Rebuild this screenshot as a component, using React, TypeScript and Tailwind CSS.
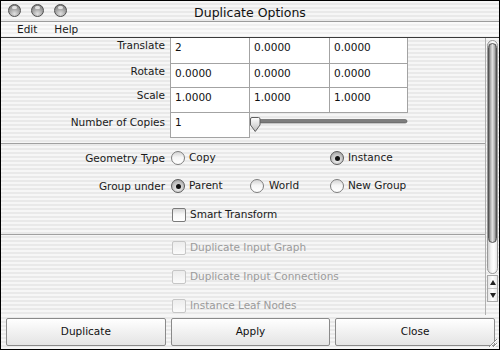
import React from "react";

const stripes =
  "bg-[repeating-linear-gradient(to_bottom,#f6f6f6_0px,#f6f6f6_2px,#e9e9e9_2px,#e9e9e9_4px)]";

function Light() {
  return (
    <div className="w-[13px] h-[13px] rounded-full border border-[#4f4f4f] bg-[radial-gradient(circle_at_50%_80%,#e2e2e2_0%,#a9a9a9_45%,#6e6e6e_100%)] relative">
      <div className="absolute left-[3px] top-[1px] w-[5px] h-[3px] rounded-full bg-[#f4f4f4] opacity-80" />
    </div>
  );
}

function Radio({ on }: { on?: boolean }) {
  return (
    <div
      className={
        on
          ? "w-[14px] h-[14px] rounded-full border border-[#5c5c5c] bg-[radial-gradient(circle_at_50%_70%,#f2f2f2_0%,#c4c4c4_55%,#8d8d8d_100%)] flex items-center justify-center shrink-0"
          : "w-[14px] h-[14px] rounded-full border border-[#7d7d7d] bg-[linear-gradient(to_bottom,#d4d4d4,#f6f6f6_45%,#ffffff)] shrink-0"
      }
    >
      {on && <div className="w-[5px] h-[5px] rounded-full bg-[#111]" />}
    </div>
  );
}

function Check({ disabled }: { disabled?: boolean }) {
  return (
    <div
      className={
        disabled
          ? "w-[14px] h-[14px] rounded-[2px] border border-[#c6c6c6] bg-[linear-gradient(to_bottom,#ececec,#fbfbfb)] shrink-0"
          : "w-[14px] h-[14px] rounded-[2px] border border-[#7a7a7a] bg-[linear-gradient(to_bottom,#d6d6d6,#f8f8f8_45%,#ffffff)] shrink-0"
      }
    />
  );
}

function Label({ children }: { children: React.ReactNode }) {
  return (
    <div className="w-[169px] shrink-0 text-right pr-[5px] leading-[13px]">{children}</div>
  );
}

function Cell({ v, w, last }: { v: string; w: string; last?: boolean }) {
  return (
    <div
      className={
        (last ? "border-r " : "") +
        w +
        " h-full bg-white border-l border-b border-[#a3a3a3] pl-[4px] pt-[3px] leading-[13px] text-[#111]"
      }
    >
      {v}
    </div>
  );
}

function FieldRow({
  label,
  vals,
  h,
}: {
  label: string;
  vals: string[];
  h: string;
}) {
  return (
    <div className={"flex " + h}>
      <div className="pt-[1px]">
        <Label>{label}</Label>
      </div>
      <Cell v={vals[0]} w="w-[79px]" />
      <Cell v={vals[1]} w="w-[80px]" />
      <Cell v={vals[2]} w="w-[79px]" last />
    </div>
  );
}

function Btn({ children }: { children: React.ReactNode }) {
  return (
    <div className="h-[28px] rounded-[2px] border border-[#8a8a8a] bg-[linear-gradient(to_bottom,#ffffff,#f1f1f1_50%,#e4e4e4)] flex items-center justify-center text-[#111] shadow-[inset_0_1px_0_#ffffff]">
      {children}
    </div>
  );
}

export default function App() {
  return (
    <div className="w-[500px] h-[350px] border border-black flex flex-col relative overflow-hidden font-['DejaVu_Sans',sans-serif] text-[10.5px] text-[#1a1a1a] bg-[#eeeeee]">
      {/* Title bar */}
      <div className={"h-[21px] shrink-0 border-b border-[#9c9c9c] grid grid-cols-[1fr_auto_1fr] " + stripes}>
        <div className="flex gap-[10px] pl-[7px] pt-[3px]">
          <Light />
          <Light />
          <Light />
        </div>
        <div className="text-[12.5px] leading-[15px] pt-[4px] text-[#111]">Duplicate Options</div>
        <div />
      </div>

      {/* Menu bar */}
      <div className="h-[16px] shrink-0 border-b border-[#3a3a3a] flex items-center bg-[repeating-linear-gradient(to_bottom,#fafafa_0px,#fafafa_2px,#f0f0f0_2px,#f0f0f0_4px)] leading-[13px]">
        <span className="pl-[16px]">Edit</span>
        <span className="pl-[17px]">Help</span>
      </div>

      {/* Middle */}
      <div className="h-[277px] shrink-0 flex">
        <div className={"w-[484px] shrink-0 overflow-hidden flex flex-col " + stripes}>
          <FieldRow label="Translate" vals={["2", "0.0000", "0.0000"]} h="h-[26px]" />
          <FieldRow label="Rotate" vals={["0.0000", "0.0000", "0.0000"]} h="h-[24px]" />
          <FieldRow label="Scale" vals={["1.0000", "1.0000", "1.0000"]} h="h-[25px]" />
          <div className="flex h-[25px]">
            <div className="pt-[3px]">
              <Label>Number of Copies</Label>
            </div>
            <div className="w-[80px] h-full bg-white border-l border-r border-b border-[#a3a3a3] pl-[4px] pt-[3px] leading-[13px] text-[#111]">
              1
            </div>
            <svg width="158" height="24" viewBox="0 0 158 24" className="shrink-0">
              <defs>
                <linearGradient id="thumb" x1="0" y1="0" x2="0" y2="1">
                  <stop offset="0" stopColor="#ffffff" />
                  <stop offset="1" stopColor="#bdbdbd" />
                </linearGradient>
              </defs>
              <rect x="2" y="6.5" width="155" height="3.5" rx="1.75" fill="#7d7d7d" stroke="#555" strokeWidth="0.6" />
              <path
                d="M2 4.5 H8.5 A1.5 1.5 0 0 1 10 6 V12 L5.25 18.5 L0.5 12 V6 A1.5 1.5 0 0 1 2 4.5 Z"
                fill="url(#thumb)"
                stroke="#5f5f5f"
                strokeWidth="1"
              />
            </svg>
          </div>

          <div className="mt-[5px] border-t border-[#a0a0a0]" />

          <div className="h-[28px] flex items-center">
            <Label>Geometry Type</Label>
            <div className="w-[159px] flex items-center ml-[1px]">
              <Radio />
              <span className="ml-[4px]">Copy</span>
            </div>
            <div className="flex items-center">
              <Radio on />
              <span className="ml-[4px]">Instance</span>
            </div>
          </div>

          <div className="h-[28px] flex items-center">
            <Label>Group under</Label>
            <div className="w-[79px] flex items-center ml-[1px]">
              <Radio on />
              <span className="ml-[4px]">Parent</span>
            </div>
            <div className="w-[80px] flex items-center">
              <Radio />
              <span className="ml-[5px]">World</span>
            </div>
            <div className="flex items-center">
              <Radio />
              <span className="ml-[4px]">New Group</span>
            </div>
          </div>

          <div className="h-[29px] flex items-center pt-[1px]">
            <div className="w-[171px] shrink-0" />
            <Check />
            <span className="ml-[4px]">Smart Transform</span>
          </div>

          <div className="mt-[5px] border-t border-[#a0a0a0]" />

          <div className="pt-[6px] flex flex-col gap-[15px] text-[#9b9b9b]">
            <div className="h-[14px] flex items-center">
              <div className="w-[171px] shrink-0" />
              <Check disabled />
              <span className="ml-[4px]">Duplicate Input Graph</span>
            </div>
            <div className="h-[14px] flex items-center">
              <div className="w-[171px] shrink-0" />
              <Check disabled />
              <span className="ml-[4px]">Duplicate Input Connections</span>
            </div>
            <div className="h-[14px] flex items-center">
              <div className="w-[171px] shrink-0" />
              <Check disabled />
              <span className="ml-[4px]">Instance Leaf Nodes</span>
            </div>
          </div>
        </div>

        {/* Scrollbar */}
        <div className={"w-[14px] shrink-0 border-l border-[#b0b0b0] flex flex-col " + stripes}>
          <div className="ml-[1px] mt-[2px] w-[11px] h-[234px] rounded-full border border-[#9a9a9a] bg-[linear-gradient(to_right,#cfcfcf,#f4f4f4_35%,#ffffff_65%,#e6e6e6)] pt-[2px]">
            <div className="h-[200px] rounded-full border border-[#555555] bg-[linear-gradient(to_right,#6f6f6f,#b9b9b9_25%,#dedede_50%,#b3b3b3_78%,#6c6c6c)]" />
          </div>
          <div className="ml-[1px] mt-[1px] w-[11px] border border-[#a8a8a8] bg-[linear-gradient(to_right,#e4e4e4,#ffffff_50%,#e8e8e8)] flex flex-col">
            <div className="h-[13px] flex items-center justify-center border-b border-[#c4c4c4]">
              <svg width="6" height="5" viewBox="0 0 6 5">
                <path d="M3 0 L6 5 H0 Z" fill="#222" />
              </svg>
            </div>
            <div className="h-[12px] flex items-center justify-center">
              <svg width="6" height="5" viewBox="0 0 6 5">
                <path d="M0 0 H6 L3 5 Z" fill="#222" />
              </svg>
            </div>
          </div>
        </div>
      </div>

      {/* Button bar */}
      <div className={"h-[34px] shrink-0 grid grid-cols-3 gap-[5px] pl-[5px] pr-[4px] pt-[3px] " + stripes}>
        <Btn>Duplicate</Btn>
        <Btn>Apply</Btn>
        <Btn>Close</Btn>
      </div>

      {/* resize grip */}
      <svg width="12" height="12" viewBox="0 0 12 12" className="absolute right-[1px] bottom-[1px]">
        <path d="M11 3 L3 11 M11 7 L7 11 M11 10.5 L10.5 11" stroke="#8a8a8a" strokeWidth="1" />
        <path d="M11 4 L4 11 M11 8 L8 11" stroke="#ffffff" strokeWidth="1" />
      </svg>
    </div>
  );
}
